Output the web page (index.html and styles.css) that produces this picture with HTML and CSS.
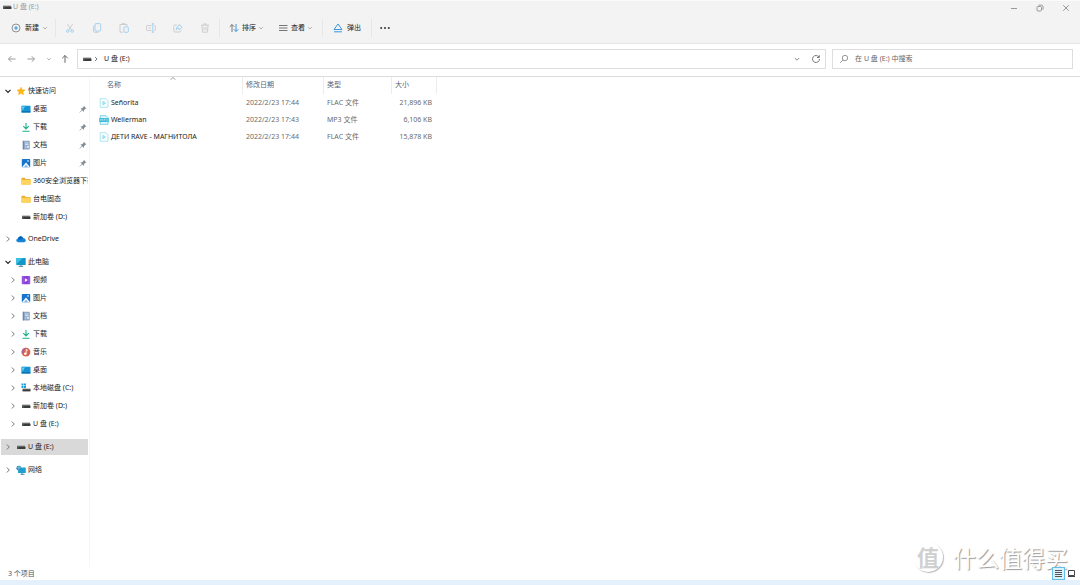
FILE: index.html
```
<!DOCTYPE html>
<html lang="zh-CN">
<head>
<meta charset="utf-8">
<title>U 盘 (E:)</title>
<link rel="stylesheet" href="styles.css">
</head>
<body>
<svg class="sprite" aria-hidden="true">
  <symbol id="drive" viewBox="0 0 10 10"><rect x="1" y="3.5" width="8" height="1.5" fill="#999"/><rect x="1" y="4.5" width="8.5" height="2.5" rx=".4" fill="#3b3b3b"/><rect x="1.5" y="5.3" width="1" height="1" fill="#4fa864"/></symbol>
  <symbol id="down" viewBox="0 0 10 10"><path d="M2.8 4l2.2 2.2L7.2 4" fill="none" stroke="currentColor"/></symbol>
  <symbol id="right" viewBox="0 0 10 10"><path d="M3.8 2.5L6.3 5 3.8 7.5" fill="none" stroke="currentColor"/></symbol>
  <symbol id="open" viewBox="0 0 10 10"><path d="M2.5 3.8L5 6.3l2.5-2.5" fill="none" stroke="currentColor" stroke-width="1.2"/></symbol>
  <symbol id="star" viewBox="0 0 10 10"><path d="M5 1.2l1.2 2.5 2.8.3-2.1 1.9.6 2.8L5 7.3 2.5 8.7l.6-2.8L1 4l2.8-.3z" fill="#fdb813" stroke="#f5a80f" stroke-width=".5"/></symbol>
  <symbol id="desktop" viewBox="0 0 10 10"><rect x=".5" y="1.8" width="9" height="6.8" rx=".7" fill="#1793d1"/><path d="M.5 6.5V2.5q0-.7.7-.7h4z" fill="#35b6e6"/><path d="M1.5 3.4h1.2M1.5 5h1.2" stroke="#c9f0ff" stroke-width=".8"/><path d="M.5 7.3h9v.6q0 .7-.7.7H1.2q-.7 0-.7-.7z" fill="#0b6daa"/></symbol>
  <symbol id="download" viewBox="0 0 10 10"><path d="M5 1v5.5M2.3 4.2L5 6.9l2.7-2.7M1.5 9.2h7" fill="none" stroke="#16b38a" stroke-width="1.1"/></symbol>
  <symbol id="document" viewBox="0 0 10 10"><rect x="1.8" y=".8" width="7" height="8.6" rx=".6" fill="#8fa8c7"/><rect x="1.8" y=".8" width="1.2" height="8.6" fill="#6b88ad"/><path d="M4 3h3.5M4 4.6h3.5M4 7h1.5" stroke="#e9f1fa" stroke-width=".8"/><rect x="6.2" y="5.8" width="1.7" height="2" fill="#e9f1fa"/></symbol>
  <symbol id="picture" viewBox="0 0 10 10"><rect x=".8" y="1" width="8.4" height="8.2" rx=".8" fill="#1775cf"/><path d="M1.2 9L5 4.4 8.8 9z" fill="#fff"/><path d="M3 9l2-2.4L7 9z" fill="#77b9f3"/><rect x="6.3" y="2.3" width="1.4" height="1.3" fill="#fff"/></symbol>
  <symbol id="folder" viewBox="0 0 10 10"><path d="M.5 1.8h3.2l1 1.1h4.8v5.6h-9z" fill="#e9a92d"/><path d="M.5 3.8h9v4.3q0 .6-.6.6H1.1q-.6 0-.6-.6z" fill="#ffd35c"/></symbol>
  <symbol id="cloud" viewBox="0 0 10 10"><path d="M2.2 8.2Q.2 8 .2 6.3 .3 4.9 1.7 4.7 2.4 2.2 4.7 2.2 6.3 2.3 7.1 3.9 9.8 4.2 9.8 6.4 9.6 8.1 8 8.2z" fill="#1384db"/><path d="M1.7 4.7Q2.4 2.2 4.7 2.2 6.3 2.3 7.1 3.9L4 6z" fill="#0a62b8"/></symbol>
  <symbol id="pc" viewBox="0 0 10 10"><rect x=".3" y="1" width="9.4" height="7" rx=".6" fill="#1596c9"/><path d="M.3 7V1.6q0-.6.6-.6H7z" fill="#37c1e4"/><path d="M2.8 9.3h4.4M5 7.8v1.3" stroke="#3c7896" stroke-width=".9"/></symbol>
  <symbol id="video" viewBox="0 0 10 10"><rect x=".8" y="1" width="8.4" height="8.2" rx=".7" fill="#8b3fd9"/><path d="M2 1.5v7.5M8 1.5v7.5" stroke="#c79cf3" stroke-width=".8" stroke-dasharray="1 1"/><path d="M3.9 3.2v3.8l3-1.9z" fill="#fff"/></symbol>
  <symbol id="music" viewBox="0 0 10 10"><circle cx="5" cy="5.1" r="4.4" fill="#d9624c"/><path d="M5 .7a4.4 4.4 0 0 0-4 6.2z" fill="#b0609a"/><path d="M5.2 6.6V2.5l1.6.9" fill="none" stroke="#fff" stroke-width=".9"/><circle cx="4.3" cy="6.7" r="1.2" fill="#fff"/></symbol>
  <symbol id="system" viewBox="0 0 10 10"><path d="M.5.5h2v2h-2zM3 .5h2v2H3zM.5 3h2v2h-2zM3 3h2v2H3z" fill="#1b9be0"/><rect x="1.5" y="5.5" width="8" height="1" fill="#999"/><rect x="1.5" y="6.2" width="8" height="2.2" fill="#3b3b3b"/></symbol>
  <symbol id="network" viewBox="0 0 10 10"><rect x="2" y="2.5" width="7.8" height="5.6" rx=".5" fill="#1f9fd2"/><path d="M4.5 9.3h4M6 7.8v1.3" stroke="#397f9e" stroke-width=".9"/><circle cx="2.8" cy="3.2" r="2.4" fill="#2586bb"/><path d="M.6 2.8h4.4M2.8.8v4.8" stroke="#9bdcf0" stroke-width=".6"/></symbol>
  <symbol id="pin" viewBox="0 0 10 10"><path d="M5.8 1.8l2.6 2.6-1 .3-1.3 1.4-.2 1.8-3.5-3.5 1.8-.2L5.500 2.9z" fill="#828c96"/><path d="M4 6.2L1.8 8.4" stroke="#828c96" stroke-width=".8"/></symbol>
  <symbol id="media" viewBox="0 0 10 10"><path d="M1.2.7h5.8l2 2v6.6H1.2z" fill="#fafeff" stroke="#9be0ef" stroke-width=".8"/><path d="M3.9 3.3v3.6l2.8-1.8z" fill="#bdeaf4" stroke="#63cfe5" stroke-width=".5"/></symbol>
  <symbol id="mp3" viewBox="0 0 10 10"><path d="M1.2.7h5.8l2 2v6.6H1.2z" fill="#e3f8fc" stroke="#5cc8df" stroke-width=".8"/><rect x=".2" y="3" width="9.6" height="4" rx=".4" fill="#35bad7"/><path d="M1.5 6V4l1 1.2 1-1.2v2M5 6V4h1v1H5M7.2 4h1v2h-1" fill="none" stroke="#c8f1f8" stroke-width=".5"/></symbol>
</svg>

<div class="window">
  <header class="top">
    <div class="titlebar">
      <div class="caption"><svg class="icon"><use href="#drive"/></svg><span>U 盘 (E:)</span></div>
      <div class="controls">
        <button aria-label="最小化"><svg class="icon" viewBox="0 0 10 10"><path d="M2 5.5h6"/></svg></button>
        <button aria-label="还原"><svg class="icon" viewBox="0 0 10 10"><rect x="2" y="3.5" width="4.5" height="4.5" rx="1"/><path d="M3.5 2.2h3q1.5 0 1.5 1.5v3"/></svg></button>
        <button aria-label="关闭"><svg class="icon" viewBox="0 0 10 10"><path d="M2.2 2.2l5.6 5.6M7.8 2.2L2.2 7.8"/></svg></button>
      </div>
    </div>
    <div class="toolbar">
      <button class="tool new"><svg class="icon" viewBox="0 0 10 10"><circle cx="5" cy="5" r="4" stroke="#777" stroke-width=".8"/><path class="blue" d="M5 3v4M3 5h4"/></svg><span>新建</span><svg class="caret"><use href="#down"/></svg></button>
      <div class="actions">
        <button aria-label="剪切"><svg class="icon" viewBox="0 0 10 10"><path d="M2.2.8L6.3 7M7.8.8L3.7 7"/><circle class="blue" cx="2.8" cy="8" r="1.3"/><circle class="blue" cx="7.2" cy="8" r="1.3"/></svg></button>
        <button aria-label="复制"><svg class="icon" viewBox="0 0 10 10"><path d="M2.5 2.5q-1 .2-1 1v4.5q0 1.3 1.3 1.3h3.7"/><rect class="blue" x="3" y=".6" width="5.7" height="7.4" rx="1"/></svg></button>
        <button aria-label="粘贴"><svg class="icon" viewBox="0 0 10 10"><path d="M4 9.2H1V1.5h7v1.3M3.2 1.5V.6h2.7v.9"/><rect class="blue" x="5" y="3.8" width="4.3" height="5.5" rx=".7"/></svg></button>
        <button aria-label="重命名"><svg class="icon" viewBox="0 0 10 10"><path d="M5.5 2.5H1.5q-1 0-1 1v3q0 1 1 1h4M2.5 5h2.5M8 2.5q1.5 0 1.5 1v3q0 1-1.5 1"/><path class="blue" d="M6.8.8v8.4M5.7.8h2.2M5.7 9.2h2.2"/></svg></button>
        <button aria-label="共享"><svg class="icon" viewBox="0 0 10 10"><path d="M4 2H2Q.8 2 .8 3.2v4.5Q.8 9 2 9h4.5q1.3 0 1.3-1.3V7"/><path class="blue" d="M6 1.5l3.2 2.7L6 6.8V5.3Q3.8 5.3 3 6.8 3.2 3.5 6 3z"/></svg></button>
        <button aria-label="删除"><svg class="icon" viewBox="0 0 10 10"><path d="M1 2.2h8M2 2.2l.5 7h5l.5-7M3.7 2V.9h2.6V2M4 4v3.3M6 4v3.3"/></svg></button>
      </div>
      <button class="tool sort"><svg class="icon" viewBox="0 0 10 10"><path d="M3 9V1.5M.7 3.8L3 1.5l2.3 2.3" stroke="#777"/><path class="blue" d="M7 1v7.5M4.7 6.2L7 8.5l2.3-2.3"/></svg><span>排序</span><svg class="caret"><use href="#down"/></svg></button>
      <button class="tool view"><svg class="icon" viewBox="0 0 10 10"><path d="M1 2.5h8.5M1 5h8.5M1 7.5h8.5" stroke="#777"/></svg><span>查看</span><svg class="caret"><use href="#down"/></svg></button>
      <button class="tool eject"><svg class="icon" viewBox="0 0 10 10"><path class="blue" d="M5 1L1 6.5h8zM1 8.8h8"/></svg><span>弹出</span></button>
      <button class="more" aria-label="更多"><svg class="icon" viewBox="0 0 10 10"><g fill="#333" stroke="none"><circle cx="1.2" cy="5" r="1"/><circle cx="5" cy="5" r="1"/><circle cx="8.8" cy="5" r="1"/></g></svg></button>
    </div>
  </header>

  <div class="navbar">
    <div class="history">
      <button aria-label="后退"><svg class="icon" viewBox="0 0 10 10"><path d="M8.5 5h-7M4.3 2.2L1.5 5l2.8 2.8"/></svg></button>
      <button aria-label="前进"><svg class="icon" viewBox="0 0 10 10"><path d="M1.5 5h7M5.7 2.2L8.5 5 5.7 7.8"/></svg></button>
      <button aria-label="最近位置"><svg class="caret"><use href="#down"/></svg></button>
      <button class="up" aria-label="向上"><svg class="icon" viewBox="0 0 10 10"><path d="M5 8.8V1.5M2.2 4.3L5 1.5l2.8 2.8"/></svg></button>
    </div>
    <div class="address">
      <svg class="icon"><use href="#drive"/></svg><svg class="crumb"><use href="#right"/></svg><span class="path">U 盘 (E:)</span>
      <button aria-label="展开"><svg class="icon"><use href="#down"/></svg></button>
      <button aria-label="刷新"><svg class="icon" viewBox="0 0 10 10"><path d="M8 3.2A3.5 3.5 0 1 0 8.5 5M8.3 1.2v2.3H6"/></svg></button>
    </div>
    <label class="search"><svg class="icon" viewBox="0 0 10 10"><circle cx="6" cy="4" r="2.7"/><path d="M4 6L1.3 8.7"/></svg><input type="search" aria-label="搜索" placeholder="在 U 盘 (E:) 中搜索"></label>
  </div>

  <div class="content">
    <nav class="sidebar">
      <ul class="group quick">
        <li><a href="#" class="item"><svg class="icon dark"><use href="#open"/></svg><svg class="icon"><use href="#star"/></svg><span>快速访问</span></a></li>
        <li><a href="#" class="item child"><svg class="icon gap"></svg><svg class="icon"><use href="#desktop"/></svg><span>桌面</span><svg class="icon pin"><use href="#pin"/></svg></a></li>
        <li><a href="#" class="item child"><svg class="icon gap"></svg><svg class="icon"><use href="#download"/></svg><span>下载</span><svg class="icon pin"><use href="#pin"/></svg></a></li>
        <li><a href="#" class="item child"><svg class="icon gap"></svg><svg class="icon"><use href="#document"/></svg><span>文档</span><svg class="icon pin"><use href="#pin"/></svg></a></li>
        <li><a href="#" class="item child"><svg class="icon gap"></svg><svg class="icon"><use href="#picture"/></svg><span>图片</span><svg class="icon pin"><use href="#pin"/></svg></a></li>
        <li><a href="#" class="item child"><svg class="icon gap"></svg><svg class="icon"><use href="#folder"/></svg><span>360安全浏览器下载</span></a></li>
        <li><a href="#" class="item child"><svg class="icon gap"></svg><svg class="icon"><use href="#folder"/></svg><span>台电固态</span></a></li>
        <li><a href="#" class="item child"><svg class="icon gap"></svg><svg class="icon"><use href="#drive"/></svg><span>新加卷 (D:)</span></a></li>
      </ul>
      <ul class="group">
        <li><a href="#" class="item"><svg class="icon"><use href="#right"/></svg><svg class="icon"><use href="#cloud"/></svg><span>OneDrive</span></a></li>
      </ul>
      <ul class="group">
        <li><a href="#" class="item"><svg class="icon dark"><use href="#open"/></svg><svg class="icon"><use href="#pc"/></svg><span>此电脑</span></a></li>
        <li><a href="#" class="item child"><svg class="icon"><use href="#right"/></svg><svg class="icon"><use href="#video"/></svg><span>视频</span></a></li>
        <li><a href="#" class="item child"><svg class="icon"><use href="#right"/></svg><svg class="icon"><use href="#picture"/></svg><span>图片</span></a></li>
        <li><a href="#" class="item child"><svg class="icon"><use href="#right"/></svg><svg class="icon"><use href="#document"/></svg><span>文档</span></a></li>
        <li><a href="#" class="item child"><svg class="icon"><use href="#right"/></svg><svg class="icon"><use href="#download"/></svg><span>下载</span></a></li>
        <li><a href="#" class="item child"><svg class="icon"><use href="#right"/></svg><svg class="icon"><use href="#music"/></svg><span>音乐</span></a></li>
        <li><a href="#" class="item child"><svg class="icon"><use href="#right"/></svg><svg class="icon"><use href="#desktop"/></svg><span>桌面</span></a></li>
        <li><a href="#" class="item child"><svg class="icon"><use href="#right"/></svg><svg class="icon"><use href="#system"/></svg><span>本地磁盘 (C:)</span></a></li>
        <li><a href="#" class="item child"><svg class="icon"><use href="#right"/></svg><svg class="icon"><use href="#drive"/></svg><span>新加卷 (D:)</span></a></li>
        <li><a href="#" class="item child"><svg class="icon"><use href="#right"/></svg><svg class="icon"><use href="#drive"/></svg><span>U 盘 (E:)</span></a></li>
      </ul>
      <ul class="group">
        <li><a href="#" class="item selected" aria-current="page"><svg class="icon"><use href="#right"/></svg><svg class="icon"><use href="#drive"/></svg><span>U 盘 (E:)</span></a></li>
      </ul>
      <ul class="group">
        <li><a href="#" class="item"><svg class="icon"><use href="#right"/></svg><svg class="icon"><use href="#network"/></svg><span>网络</span></a></li>
      </ul>
    </nav>
    <main class="files">
      <table>
        <colgroup><col class="col-name"><col class="col-date"><col class="col-type"><col class="col-size"></colgroup>
        <thead><tr><th class="name" aria-sort="ascending">名称<svg class="sorted" viewBox="0 0 6 3"><path d="M.5 2.8L3 .5l2.5 2.3" fill="none" stroke="#888" stroke-width=".8"/></svg></th><th>修改日期</th><th>类型</th><th>大小</th></tr></thead>
        <tbody>
          <tr><td class="name"><div class="file"><svg class="icon"><use href="#media"/></svg><span>Señorita</span></div></td><td>2022/2/23 17:44</td><td>FLAC 文件</td><td class="size">21,896 KB</td></tr>
          <tr><td class="name"><div class="file"><svg class="icon"><use href="#mp3"/></svg><span>Wellerman</span></div></td><td>2022/2/23 17:43</td><td>MP3 文件</td><td class="size">6,106 KB</td></tr>
          <tr><td class="name"><div class="file"><svg class="icon"><use href="#media"/></svg><span>ДЕТИ RAVE - МАГНИТОЛА</span></div></td><td>2022/2/23 17:44</td><td>FLAC 文件</td><td class="size">15,878 KB</td></tr>
        </tbody>
      </table>
    </main>
  </div>

  <footer class="status">
    <span>3 个项目</span>
    <div class="modes">
      <button class="active" aria-label="详细信息"><svg class="lines" viewBox="0 0 7 7"><path d="M0 .5h7M0 2.5h7M0 4.5h7M0 6.5h7" stroke="#555"/></svg></button>
      <button aria-label="大图标"><svg class="lines" viewBox="0 0 7 7"><path d="M.5.5h6v5h-6z" fill="#fff" stroke="#444"/><path d="M0 6.5h7" stroke="#444"/></svg></button>
    </div>
  </footer>
  <div class="edge"></div>
  <div class="watermark"><span class="seal">值</span><span>什么值得买</span></div>
</div>
</body>
</html>
```

FILE: styles.css
```
* { box-sizing: border-box; }

body {
  margin: 0;
  background: #fff;
  color: #222;
  font: 7px/10px "Noto Sans", "Noto Sans CJK SC", sans-serif;
}

button {
  display: flex;
  align-items: center;
  justify-content: center;
  padding: 0;
  border: 0;
  background: none;
  color: inherit;
  font: inherit;
}

a { color: inherit; text-decoration: none; }
ul { margin: 0; padding: 0; list-style: none; }

.sprite { position: absolute; width: 0; height: 0; }
.icon { flex: none; width: 10px; height: 10px; fill: none; stroke-width: 1; }
.caret { flex: none; width: 8px; height: 8px; color: #999; }

.window {
  position: relative;
  display: flex;
  flex-direction: column;
  min-height: 100vh;
}

.top { background: #f3f3f3; border-bottom: 1px solid #e5e5e5; }

.titlebar {
  display: flex;
  align-items: center;
  justify-content: space-between;
  height: 13px;
  border-top: 1px solid #fafafa;
  color: #999;
}
.caption { display: flex; align-items: center; gap: 1px; padding-left: 2px; }
.controls { display: flex; gap: 16px; padding: 2px 9px 0 0; }
.controls .icon { stroke: #999; }

.toolbar { display: flex; align-items: center; height: 30px; padding-left: 11px; }
.tool { gap: 4px; }
.tool .caret { margin-left: -2px; }
.actions {
  display: flex;
  align-items: center;
  gap: 17px;
  height: 18px;
  margin-left: 6px;
  padding: 0 9px;
  border-left: 1px solid #e7e7e7;
  border-right: 1px solid #e7e7e7;
}
.actions .icon { stroke: #c9c9c9; stroke-width: .9; }
.toolbar .blue { stroke: #3b97e0; }
.toolbar .actions .blue { stroke: #9ccdf0; }
.sort, .view { gap: 3px; }
.sort { margin-left: 9px; }
.view { margin-left: 13px; }
.eject {
  height: 18px;
  margin-left: 8px;
  padding: 0 10px;
  border-left: 1px solid #e7e7e7;
  border-right: 1px solid #e7e7e7;
}
.more { margin-left: 8px; }

.navbar {
  display: flex;
  align-items: center;
  height: 33px;
  padding: 0 7px 2px;
  border-bottom: 1px solid #dcdcdc;
}
.history { display: flex; align-items: center; gap: 9px; width: 70px; }
.history .icon { stroke: #999; }
.history .up { margin-left: -2px; }
.history .up .icon { stroke: #666; }
.address, .search {
  display: flex;
  align-items: center;
  height: 20px;
  border: 1px solid #dedede;
  color: #555;
}
.address { flex: 1; padding: 0 4px; }
.address button { margin-left: 9px; }
.address button .icon { stroke: #777; color: #888; }
.crumb { width: 8px; height: 8px; }
.path { flex: 1; padding-left: 4px; color: #222; }
.search { width: 22.6%; margin-left: 6px; padding: 0 6px; }
.search .icon { stroke: #999; }
.search input {
  flex: 1;
  min-width: 0;
  padding: 0 0 0 6px;
  border: 0;
  outline: 0;
  background: none;
  font: inherit;
}
.search input::placeholder { color: #666; }

.content { display: flex; flex: 1; }
.sidebar {
  width: 90px;
  padding: 5px 1px 0;
  border-right: 1px solid #f6f6f6;
  overflow: hidden;
}
.group { margin-bottom: 5px; }
.quick { margin-bottom: 4px; }
.group li { padding: 1px 0; }
.item {
  display: flex;
  align-items: center;
  height: 16px;
  padding-left: 2px;
  overflow: hidden;
  white-space: nowrap;
  color: #222;
}
.item .icon:first-child { margin-right: 3px; color: #777; }
.item .dark:first-child { color: #222; }
.item span { padding-left: 2px; }
.child { padding-left: 7px; }
.item .pin { margin-left: auto; }
.selected { background: #d9d9d9; }

.files { flex: 1; padding-left: 7px; }
.files table { width: 340px; table-layout: fixed; border-spacing: 0; }
.col-name { width: 146px; }
.col-date { width: 81px; }
.col-type { width: 68px; }
.col-size { width: 45px; }
.files th {
  height: 17px;
  padding: 0 3px 2px;
  border-right: 1px solid #ececec;
  color: #56657d;
  font-weight: 400;
  text-align: left;
}
.files th.name { position: relative; padding-left: 10px; }
.sorted { position: absolute; top: 0; left: 50%; width: 6px; height: 3px; }
.files td { height: 17px; padding: 0 3px; color: #6b6b6b; white-space: nowrap; }
.files td.name { padding-left: 2px; color: #222; }
.files td.size { padding-right: 5px; text-align: right; }
.file { display: flex; align-items: center; gap: 2px; }

.status {
  display: flex;
  align-items: center;
  justify-content: space-between;
  height: 13px;
  padding: 0 2px 0 8px;
  color: #44536b;
}
.modes { position: relative; z-index: 1; display: flex; }
.modes button { width: 13px; height: 13px; }
.modes .active { border: 1px solid #63bfe8; background: #d9f1fc; }
.lines { width: 7px; height: 7px; fill: none; stroke-width: 1; }
.edge { height: 5px; background: #e4f0fb; }

.watermark {
  position: absolute;
  right: 12px;
  bottom: 13px;
  display: flex;
  align-items: center;
  gap: 10px;
  color: #fff;
  font: 23px/28px "Noto Sans CJK SC", sans-serif;
  text-shadow: 1px 1px 1px #999;
  pointer-events: none;
}
.seal {
  width: 30px;
  height: 30px;
  border-radius: 50%;
  box-shadow: 1px 1px 1px #bbb;
  color: #d0d0d0;
  font-size: 22px;
  font-weight: 700;
  text-align: center;
  text-shadow: none;
}
```
